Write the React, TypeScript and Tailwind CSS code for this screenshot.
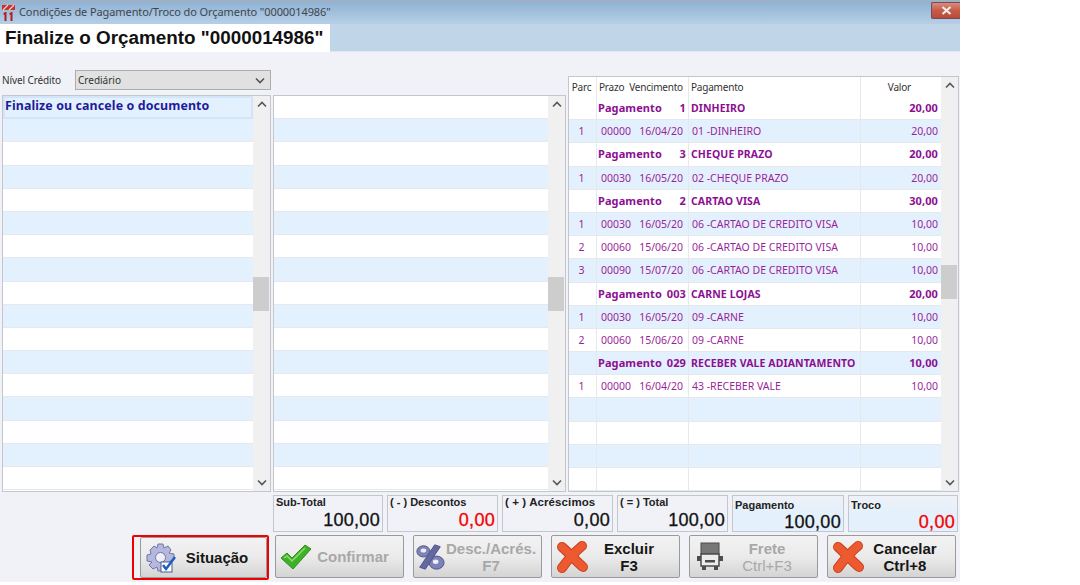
import React from 'react'

const SANS = 'font-["Liberation_Sans",Arial,sans-serif]'
const UI = 'font-["Noto_Sans",sans-serif]'
const BOLD = 'font-bold text-[#8c0f92] tracking-[0.1px]'

const Chevron = ({ up = false }: { up?: boolean }) => (
  <svg width="10" height="7" viewBox="0 0 10 7" className={up ? '' : 'rotate-180'}>
    <path d="M1 5.5 L5 1.5 L9 5.5" fill="none" stroke="#555" strokeWidth="1.6" />
  </svg>
)

const Scrollbar = ({ thumbTop }: { thumbTop: number }) => (
  <div className="w-[17px] shrink-0 bg-[#f0f0f0] flex flex-col items-center justify-between py-[5px] relative">
    <Chevron up />
    <div className="absolute left-0 w-[16px] h-[34px] bg-[#cdcdcd]" style={{ top: thumbTop }} />
    <Chevron />
  </div>
)

const EmptyList = ({ first, thumbTop, width }: { first?: string; thumbTop: number; width: string }) => (
  <div className={`${width} h-[397px] flex border border-[#c4c6ce] bg-white overflow-hidden`}>
    <div className="flex-1 min-w-0">
      {Array.from({ length: 17 }).map((_, i) => {
        const selected = i === 0 && !!first
        const tone = selected || i % 2 ? 'bg-[#e3f0fd]' : 'bg-white'
        return (
          <div
            key={i}
            className={`h-[23.2px] ${tone} ${selected ? 'border-2 border-[#d3e5f8] flex items-start' : 'border-b border-[#e6e8ec]'}`}
          >
            {selected && (
              <span className={`${UI} text-[12.4px] font-bold leading-[15px] tracking-[0.12px] text-[#1c1c9c] whitespace-nowrap`}>{first}</span>
            )}
          </div>
        )
      })}
    </div>
    <Scrollbar thumbTop={thumbTop} />
  </div>
)

type Row = { parc?: string; prazo?: string; venc?: string; pag?: string; valor?: string; title?: string; num?: string }

const rows: Row[] = [
  { title: 'Pagamento', num: '1', pag: 'DINHEIRO', valor: '20,00' },
  { parc: '1', prazo: '00000', venc: '16/04/20', pag: '01 -DINHEIRO', valor: '20,00' },
  { title: 'Pagamento', num: '3', pag: 'CHEQUE PRAZO', valor: '20,00' },
  { parc: '1', prazo: '00030', venc: '16/05/20', pag: '02 -CHEQUE PRAZO', valor: '20,00' },
  { title: 'Pagamento', num: '2', pag: 'CARTAO VISA', valor: '30,00' },
  { parc: '1', prazo: '00030', venc: '16/05/20', pag: '06 -CARTAO DE CREDITO VISA', valor: '10,00' },
  { parc: '2', prazo: '00060', venc: '15/06/20', pag: '06 -CARTAO DE CREDITO VISA', valor: '10,00' },
  { parc: '3', prazo: '00090', venc: '15/07/20', pag: '06 -CARTAO DE CREDITO VISA', valor: '10,00' },
  { title: 'Pagamento', num: '003', pag: 'CARNE LOJAS', valor: '20,00' },
  { parc: '1', prazo: '00030', venc: '16/05/20', pag: '09 -CARNE', valor: '10,00' },
  { parc: '2', prazo: '00060', venc: '15/06/20', pag: '09 -CARNE', valor: '10,00' },
  { title: 'Pagamento', num: '029', pag: 'RECEBER VALE ADIANTAMENTO', valor: '10,00' },
  { parc: '1', prazo: '00000', venc: '16/04/20', pag: '43 -RECEBER VALE', valor: '10,00' },
  {},
  {},
  {},
  {},
]

const PaymentGrid = () => (
  <div className="w-[391px] h-[416px] flex border border-[#c4c6ce] bg-white overflow-hidden">
    <div className="flex-1 min-w-0">
      <div className={`${UI} h-[20px] flex text-[10px] leading-[20px] text-[#333] tracking-[-0.2px]`}>
        <div className="w-[28px] pr-[2px] text-center border-r border-[#e6e8ec]">Parc</div>
        <div className="w-[92px] pl-[2px] border-r border-[#e6e8ec] whitespace-nowrap">Prazo&nbsp; Vencimento</div>
        <div className="w-[172px] pl-[2px] border-r border-[#e6e8ec]">Pagamento</div>
        <div className="flex-1 pr-[30px] text-right">Valor</div>
      </div>
      {rows.map((r, i) => (
        <div
          key={i}
          className={`h-[23.2px] flex border-b border-[#e6e8ec] text-[#9a1f9a] whitespace-nowrap ${UI} text-[10.5px] leading-[22px] ${i % 2 ? 'bg-[#e3f0fd]' : 'bg-white'}`}
        >
          <div className="w-[28px] pr-[2px] text-center border-r border-[#e6e8ec]">{r.parc}</div>
          {r.title ? (
            <div className={`w-[92px] pl-[1px] pr-[2px] flex justify-between border-r border-[#e6e8ec] text-[11px] ${BOLD}`}>
              <span>{r.title}</span>
              <span>{r.num}</span>
            </div>
          ) : (
            <div className="w-[92px] pl-[4px] pr-[5px] flex justify-between border-r border-[#e6e8ec]">
              <span>{r.prazo}</span>
              <span>{r.venc}</span>
            </div>
          )}
          <div className={`w-[172px] border-r border-[#e6e8ec] ${r.title ? `pl-[2px] text-[10.5px] ${BOLD}` : 'pl-[3px]'}`}>{r.pag}</div>
          <div className={`flex-1 text-right pr-[3px] ${r.title ? `text-[11px] ${BOLD}` : ''}`}>{r.valor}</div>
        </div>
      ))}
    </div>
    <Scrollbar thumbTop={188} />
  </div>
)

const Total = ({ label, value, red, blue, w, wide }: { label: string; value: string; red?: boolean; blue?: boolean; w: string; wide?: boolean }) => (
  <div className={`${w} h-[37px] border border-[#c4c6ce] flex flex-col px-[2px] ${SANS} ${blue ? 'bg-gradient-to-b from-[#eef1f7] via-[#e4f0fc] to-[#e4f0fc] pt-[3px]' : 'bg-[#f0f2f8]'}`}>
    <div className={`font-bold text-[#222] whitespace-nowrap leading-[13px] ${wide ? 'text-[11.5px] tracking-[0.1px]' : 'text-[11px]'}`}>{label}</div>
    <div className={`text-[18px] leading-[20px] text-right mt-auto mb-[1px] tracking-[0.3px] [-webkit-text-stroke:0.3px_currentColor] ${red ? 'text-[#f40000]' : 'text-[#111]'}`}>{value}</div>
  </div>
)

const Button = ({ icon, children, muted, compact, w = 'w-[129px]', h = 'h-[43px]' }: { icon: React.ReactNode; children: React.ReactNode; muted?: boolean; compact?: boolean; w?: string; h?: string }) => (
  <div className={`${w} ${h} shrink-0 flex items-center rounded-[2px] border border-[#9a9a9a] bg-gradient-to-b from-[#f2f2f2] via-[#ebebeb] to-[#d4d4d4] ${SANS}`}>
    <div className={`${compact ? 'w-[32px]' : 'w-[40px]'} flex justify-center shrink-0`}>{icon}</div>
    <div className={`flex-1 text-center text-[15px] leading-[17px] font-bold whitespace-nowrap ${compact ? 'pr-[7px]' : 'pr-[13px]'} ${muted ? 'text-[#a8a8a8]' : 'text-[#161616]'}`}>{children}</div>
  </div>
)

const CrossIcon = () => (
  <svg width="34" height="32" viewBox="0 0 34 32">
    <path d="M7 6 C12 10 22 21 28 26 M27 5 C21 10 12 20 7 27" fill="none" stroke="#c9421f" strokeWidth="10" strokeLinecap="round" />
    <path d="M7 6 C12 10 22 21 28 26 M27 5 C21 10 12 20 7 27" fill="none" stroke="#ee5a30" strokeWidth="8" strokeLinecap="round" />
  </svg>
)

const CheckIcon = () => (
  <svg width="32" height="26" viewBox="0 0 32 26">
    <path d="M1 14 L7 9 L12 14 L25 1 L31 5 L13 25 Z" fill="#3fb02a" stroke="#2e8f1f" strokeWidth="1" strokeLinejoin="round" />
    <path d="M4 14 L7 12 L12 17 L25 4" fill="none" stroke="#8fdc6e" strokeWidth="1.5" />
  </svg>
)

const GearIcon = () => (
  <svg width="32" height="32" viewBox="0 0 32 32">
    <path d="M13 2 L18 2 L19 6 L23 4 L26 8 L24 11 L29 12 L29 18 L25 19 L26 23 L22 26 L19 24 L18 29 L13 29 L12 25 L8 27 L4 23 L7 20 L2 19 L2 13 L6 12 L5 8 L9 4 L12 6 Z" fill="#b4b8de" stroke="#70759f" strokeWidth="1" />
    <circle cx="15.5" cy="15.5" r="5" fill="#eef0f8" stroke="#70759f" />
    <rect x="16" y="20" width="11" height="10" fill="#fff" stroke="#4a5a8a" />
    <path d="M18 23 L21 27 L30 15" fill="none" stroke="#1f5fc0" strokeWidth="2.5" />
  </svg>
)

const PercentIcon = () => (
  <svg width="30" height="30" viewBox="0 0 32 32">
    <ellipse cx="9" cy="10" rx="7" ry="6" fill="#7d82b8" stroke="#4f5484" />
    <ellipse cx="9" cy="9" rx="3" ry="2.2" fill="#eceef8" />
    <ellipse cx="23" cy="22" rx="8" ry="7" fill="#7d82b8" stroke="#4f5484" />
    <ellipse cx="22" cy="21" rx="3" ry="2.4" fill="#eceef8" />
    <path d="M21 3 L27 5 L11 29 L5 27 Z" fill="#6468a2" stroke="#4f5484" />
  </svg>
)

const TruckIcon = () => (
  <svg width="26" height="29" viewBox="0 0 26 29">
    <rect x="4" y="1" width="18" height="11" fill="#777" stroke="#4c4c4c" />
    <path d="M4 12 H22 V24 H4 Z" fill="#ececec" stroke="#4c4c4c" strokeWidth="1.5" />
    <rect x="8" y="18" width="10" height="2.5" fill="#4c4c4c" />
    <rect x="0" y="14" width="4" height="5" fill="#4c4c4c" />
    <rect x="22" y="14" width="4" height="5" fill="#4c4c4c" />
    <rect x="5" y="24" width="4" height="4" fill="#4c4c4c" />
    <rect x="17" y="24" width="4" height="4" fill="#4c4c4c" />
  </svg>
)

const Logo = () => (
  <svg width="15" height="18" viewBox="0 0 15 18">
    <path d="M1 1 H14 V6 H1 Z" fill="#c9302c" />
    <path d="M2 6 L7 1 M8 6 L13 1" stroke="#f3d6d2" strokeWidth="1.2" />
    <path d="M2 10 L4 8 H5.5 V17 H3.5 V11 Z M8 10 L10 8 H11.5 V17 H9.5 V11 Z" fill="#b3201c" />
  </svg>
)

export default function App() {
  return (
    <div className="w-[1080px] h-[585px] bg-white overflow-hidden">
      <div className="w-[960px] h-[582px] flex flex-col bg-[#f0f2f8]">
        <div className="h-[24px] shrink-0 flex items-center bg-gradient-to-b from-[#8fb1d3] to-[#b6cfe6] border-t border-[#a9aeb3]">
          <div className="pl-[1px] pr-[3px] flex"><Logo /></div>
          <span className={`${UI} text-[11px] text-[#3d4650] tracking-[-0.09px]`}>Condições de Pagamento/Troco do Orçamento "0000014986"</span>
          <div className="ml-auto mt-[-5px] w-[29px] h-[17px] rounded-l-[2px] bg-gradient-to-b from-[#d98a7c] via-[#c75b49] to-[#b94a38] border border-[#7a4a58] border-r-0 flex items-center justify-center">
            <svg width="11" height="9" viewBox="0 0 11 9"><path d="M1.5 1 L9.5 8 M9.5 1 L1.5 8" stroke="#f4efe8" strokeWidth="2.2" /></svg>
          </div>
        </div>
        <div className="h-[28px] shrink-0 bg-[#c0d5e8] border-b border-[#e3e6ec]">
          <div className={`${SANS} w-[330px] h-[28px] bg-white pl-[5px] text-[18.85px] leading-[27px] font-bold text-[#111] whitespace-nowrap`}>
            Finalize o Orçamento "0000014986"
          </div>
        </div>

        <div className="flex items-end pt-[18px] pl-[2px]">
          <div className="w-[269px] shrink-0">
            <div className="flex items-center h-[20px] mb-[5px]">
              <span className={`${UI} w-[73px] text-[10px] text-[#333] tracking-[-0.1px]`}>Nível Crédito</span>
              <div className={`${UI} flex-1 h-[20px] flex items-center justify-between bg-[#e1e1e1] border border-[#adadad] pl-[2px] pr-[5px] text-[10px] text-[#333]`}>
                <span>Crediário</span>
                <Chevron />
              </div>
            </div>
            <EmptyList first="Finalize ou cancele o documento" thumbTop={181} width="w-[269px]" />
          </div>
          <div className="ml-[2px] shrink-0"><EmptyList thumbTop={181} width="w-[293px]" /></div>
          <div className="ml-[2px] shrink-0"><PaymentGrid /></div>
        </div>

        <div className="flex gap-[4px] pl-[273px] mt-[3px]">
          <Total w="w-[110px]" label="Sub-Total" value="100,00" />
          <Total w="w-[111px]" label="( - ) Descontos" value="0,00" red />
          <Total w="w-[111px]" label="( + ) Acréscimos" value="0,00" wide />
          <Total w="w-[111px]" label="( = ) Total" value="100,00" />
          <Total w="w-[112px]" label="Pagamento" value="100,00" blue />
          <Total w="w-[110px]" label="Troco" value="0,00" red blue />
        </div>

        <div className="flex items-start pl-[132px] mt-[3px]">
          <div className="border-[2px] border-[#f00000] rounded-[2px] w-[137px] h-[45px] flex items-center shrink-0 pl-[6px] mr-[6px]">
            <Button w="w-[127px]" h="h-[41px]" icon={<GearIcon />}>Situação</Button>
          </div>
          <div className="flex gap-[9px]">
            <Button muted icon={<CheckIcon />}>Confirmar</Button>
            <Button muted compact icon={<PercentIcon />}>Desc./Acrés.<br />F7</Button>
            <Button icon={<CrossIcon />}>Excluir<br />F3</Button>
            <Button muted icon={<TruckIcon />}><span>Frete</span><br /><span className="font-normal">Ctrl+F3</span></Button>
            <Button icon={<CrossIcon />}>Cancelar<br />Ctrl+8</Button>
          </div>
        </div>
      </div>
    </div>
  )
}
